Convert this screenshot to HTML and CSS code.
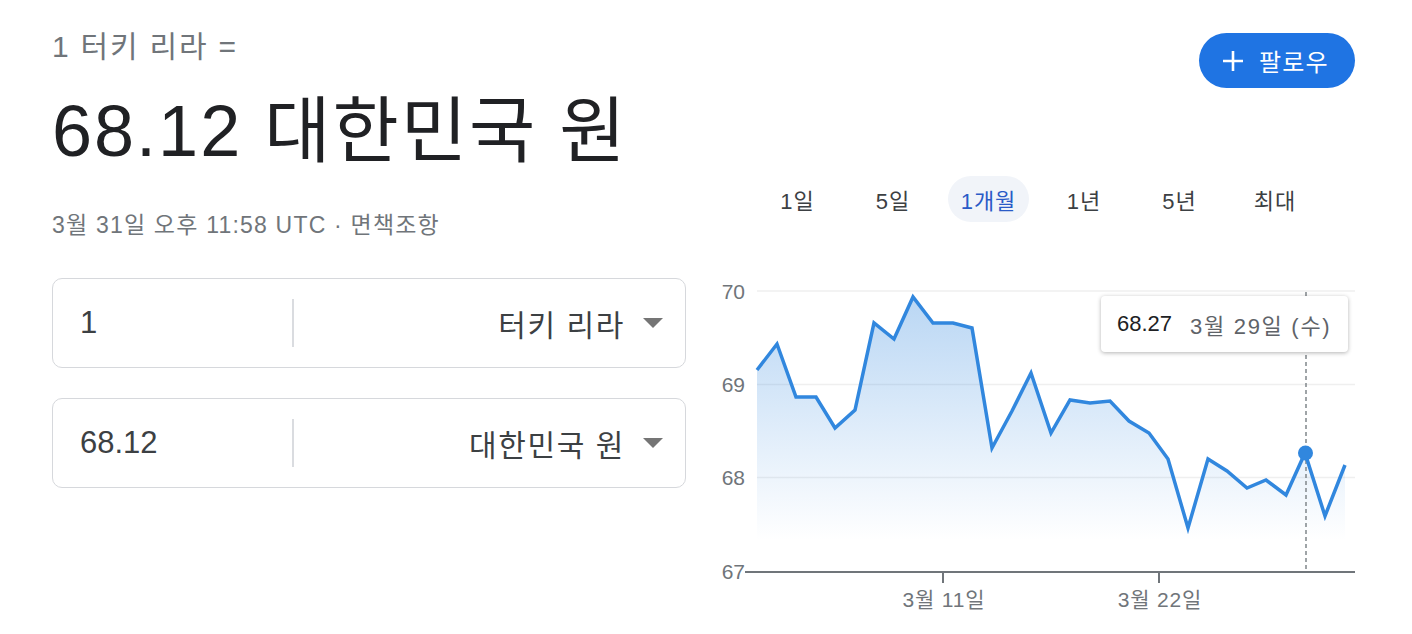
FILE: index.html
```html
<!DOCTYPE html>
<html lang="ko">
<head>
<meta charset="utf-8">
<title>1 터키 리라 = 68.12 대한민국 원</title>
<link rel="stylesheet" href="styles.css">
</head>
<body>
<div class="page">
  <section class="left">
    <div class="pair">1 터키 리라 =</div>
    <div class="rate">68.12 대한민국 원</div>
    <div class="stamp">3월 31일 오후 11:58 UTC · 면책조항</div>
    <div class="field">
      <div class="amount">1</div>
      <div class="divider"></div>
      <div class="currency">터키 리라</div>
      <span class="caret"></span>
    </div>
    <div class="field">
      <div class="amount">68.12</div>
      <div class="divider"></div>
      <div class="currency">대한민국 원</div>
      <span class="caret"></span>
    </div>
  </section>
  <section class="right">
    <div class="follow-row">
      <button class="follow">
        <svg class="plus" viewBox="0 0 22 22" width="22" height="22"><path d="M11 1v20M1 11h20" stroke="#fff" stroke-width="2.6" fill="none"/></svg>
        <span>팔로우</span>
      </button>
    </div>
    <div class="tabs">
      <div class="tab">1일</div>
      <div class="tab">5일</div>
      <div class="tab active">1개월</div>
      <div class="tab">1년</div>
      <div class="tab">5년</div>
      <div class="tab">최대</div>
    </div>
    <div class="chart">
      <svg class="plot" viewBox="700 280 660 340" width="660" height="340">
        <defs>
          <linearGradient id="fillg" gradientUnits="userSpaceOnUse" x1="0" y1="295" x2="0" y2="540">
            <stop offset="0" stop-color="#3187de" stop-opacity="0.34"/>
            <stop offset="1" stop-color="#3187de" stop-opacity="0"/>
          </linearGradient>
        </defs>
        <g class="grid">
          <line x1="757" y1="291" x2="1355" y2="291"/>
          <line x1="757" y1="384.5" x2="1355" y2="384.5"/>
          <line x1="757" y1="477.5" x2="1355" y2="477.5"/>
        </g>
        <g class="ylab">
          <text x="745" y="298.5">70</text>
          <text x="745" y="391.5">69</text>
          <text x="745" y="484.5">68</text>
          <text x="745" y="578.5">67</text>
        </g>
        <polygon class="area" points="757,370 777,344 796,397 816,397 835,428 855,410 874,323 894,339 913,297 933,323 953,323 972,328 992,448 1012,411 1031,373 1051,433 1070,400 1090,403 1110,401 1129,421 1149,433 1168,459 1188,528 1208,459 1227,471 1247,488 1266,480 1286,495 1305,453 1325,516 1345,465 1345,540 757,540"/>
        <line class="cursor" x1="1306" y1="292" x2="1306" y2="571"/>
        <polyline class="line" points="757,370 777,344 796,397 816,397 835,428 855,410 874,323 894,339 913,297 933,323 953,323 972,328 992,448 1012,411 1031,373 1051,433 1070,400 1090,403 1110,401 1129,421 1149,433 1168,459 1188,528 1208,459 1227,471 1247,488 1266,480 1286,495 1305,453 1325,516 1345,465"/>
        <circle class="dot" cx="1305.5" cy="453" r="7.5"/>
        <line class="axis" x1="745" y1="572" x2="1355" y2="572"/>
        <line class="axis" x1="943" y1="572" x2="943" y2="583"/>
        <line class="axis" x1="1159" y1="572" x2="1159" y2="583"/>
        <g class="xlab">
          <text x="944" y="607">3월 11일</text>
          <text x="1160" y="607">3월 22일</text>
        </g>
      </svg>
      <div class="tooltip"><span class="tip-val">68.27</span><span class="tip-date">3월 29일 (수)</span></div>
    </div>
  </section>
</div>
</body>
</html>
```
FILE: styles.css
```css
* { box-sizing: border-box; }
html, body { margin: 0; padding: 0; background: #fff; }
body {
  font-family: "Liberation Sans", Arial, "Noto Sans CJK KR", sans-serif;
  color: #202124;
  width: 1412px;
  height: 634px;
  overflow: hidden;
}
.page {
  display: flex;
  padding-left: 52px;
}
.left {
  width: 634px;
  display: flex;
  flex-direction: column;
}
.pair {
  margin-top: 31px;
  font-size: 30px;
  line-height: 32px;
  letter-spacing: 1.8px;
  color: #70757a;
}
.rate {
  margin-top: 26px;
  font-size: 72px;
  line-height: 84px;
  letter-spacing: 2px;
  color: #202124;
}
.stamp {
  margin-top: 38px;
  font-size: 23px;
  line-height: 28px;
  letter-spacing: 1.2px;
  color: #70757a;
}
.field {
  margin-top: 39px;
  height: 90px;
  border: 1.5px solid #d6d8dc;
  border-radius: 10px;
  display: flex;
  align-items: center;
  padding: 0 22px 0 27px;
}
.field + .field { margin-top: 30px; }
.amount {
  width: 212px;
  font-size: 31px;
  color: #3c4043;
}
.divider {
  width: 1.5px;
  height: 48px;
  background: #dadce0;
}
.currency {
  flex: 1;
  text-align: right;
  font-size: 30px;
  letter-spacing: 1.6px;
  color: #3c4043;
}
.caret {
  margin-left: 18px;
  width: 0;
  height: 0;
  border-left: 10px solid transparent;
  border-right: 10px solid transparent;
  border-top: 10px solid #757575;
}
.right {
  width: 660px;
  margin-left: 14px;
  display: flex;
  flex-direction: column;
}
.follow-row {
  display: flex;
  justify-content: flex-end;
  padding-right: 5px;
  margin-top: 33px;
}
.follow {
  display: flex;
  align-items: center;
  gap: 15px;
  height: 55px;
  width: 156px;
  padding: 0 0 0 23px;
  border: none;
  border-radius: 28px;
  background: #1f74e3;
  color: #fff;
  font-family: inherit;
  font-size: 24px;
  letter-spacing: 1.2px;
}
.plus { display: block; }
.tabs {
  margin-top: 88px;
  margin-left: 57px;
  display: flex;
  gap: 14.5px;
}
.tab {
  width: 81px;
  height: 46px;
  border-radius: 23px;
  display: flex;
  align-items: center;
  justify-content: center;
  font-size: 22px;
  letter-spacing: 1px;
  color: #3c4043;
}
.tab.active {
  background: #f1f4f9;
  color: #2a5bc7;
}
.chart {
  position: relative;
  margin-top: 58px;
  height: 340px;
}
.plot { display: block; }
.grid line { stroke: #efefef; stroke-width: 1.5; }
.ylab text {
  font-size: 21px;
  fill: #70757a;
  text-anchor: end;
  font-family: "Liberation Sans", Arial, sans-serif;
}
.xlab text {
  font-size: 21px;
  letter-spacing: 0.8px;
  fill: #70757a;
  text-anchor: middle;
  font-family: "Liberation Sans", Arial, "Noto Sans CJK KR", sans-serif;
}
.area { fill: url(#fillg); }
.line {
  fill: none;
  stroke: #3187de;
  stroke-width: 3.5;
  stroke-linejoin: miter;
}
.dot { fill: #3187de; }
.axis { stroke: #70757a; stroke-width: 2; }
.cursor { stroke: #80868b; stroke-width: 1.5; stroke-dasharray: 4 3; }
.tooltip {
  position: absolute;
  left: 401px;
  top: 16px;
  width: 247px;
  height: 56px;
  background: #fff;
  border-radius: 4px;
  box-shadow: 0 1px 4px rgba(0, 0, 0, 0.3);
  display: flex;
  align-items: center;
  padding-left: 16px;
  gap: 18px;
  font-size: 22px;
}
.tip-val { color: #202124; }
.tip-date { color: #5f6368; letter-spacing: 1.7px; }
```
